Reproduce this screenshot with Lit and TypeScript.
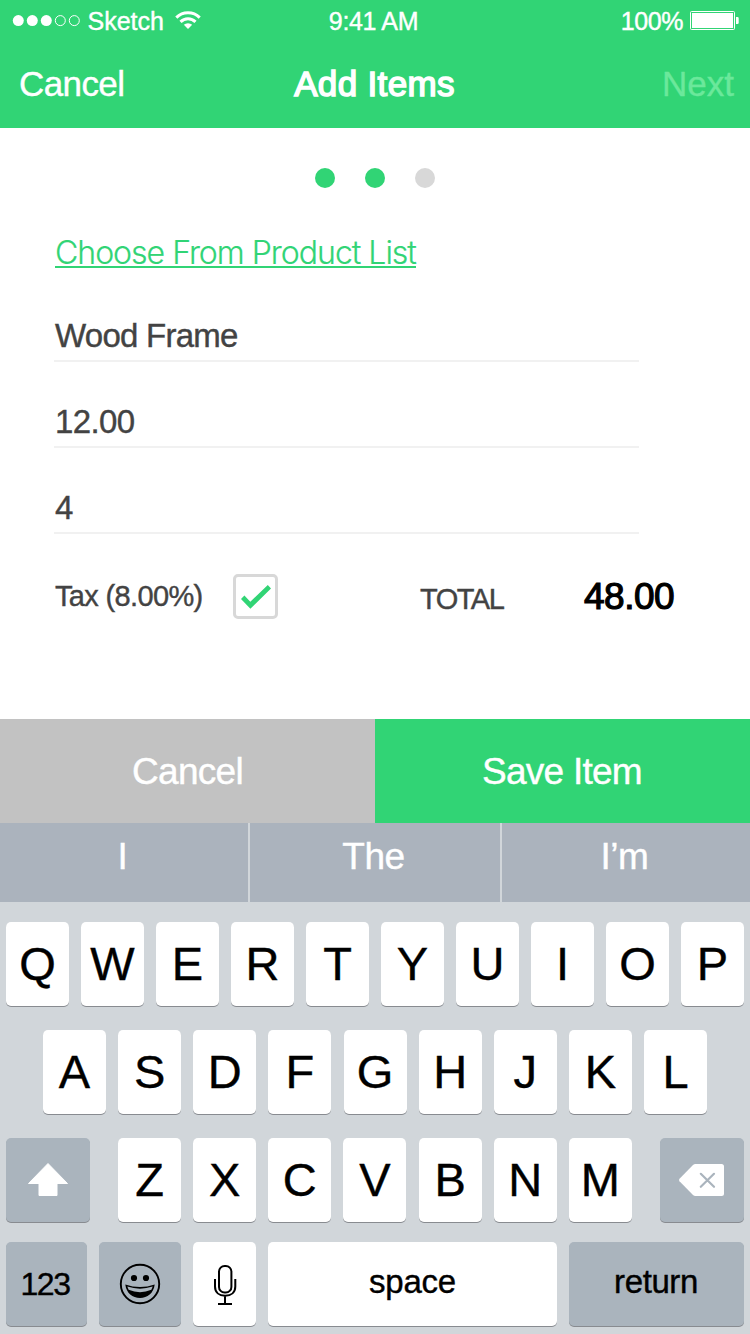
import { LitElement, html, css, svg } from "lit";
import { customElement, property } from "lit/decorators.js";

const ROWS = ["QWERTYUIOP", "ASDFGHJKL", "ZXCVBNM"];

@customElement("status-bar")
class StatusBar extends LitElement {
  static styles = css`
    :host { display: grid; grid-template-columns: 1fr auto 1fr; height: 42px; line-height: 43px; font-size: 25px; color: #fff; }
    .left { display: flex; padding-left: 12px; letter-spacing: 0; }
    .right { display: flex; justify-content: flex-end; padding-right: 11px; letter-spacing: -0.4px; }
    .time { letter-spacing: -0.35px; padding-right: 3px; }
    .signal { width: 69px; height: 42px; margin-right: 6.5px; }
    .wifi { width: 27px; height: 42px; margin-left: 11px; }
    .battery { width: 50px; height: 42px; margin-left: 6px; }
    svg { display: block; flex: none; }
  `;
  render() {
    return html`
      <div class="left">
        <svg class="signal" viewBox="0 0 69 42">
          ${[0, 1, 2, 3, 4].map((i) =>
            i < 3
              ? svg`<circle cx=${6.3 + i * 14} cy="20.6" r="5.5" fill="#fff"></circle>`
              : svg`<circle cx=${6.3 + i * 14} cy="20.6" r="5" fill="none" stroke="#fff"></circle>`
          )}
        </svg>
        <span>Sketch</span>
        <svg class="wifi" viewBox="0 0 27 42">
          <g fill="none" stroke="#fff" stroke-width="3">
            <path d="M1.300 17.600a16.600 16.600 0 0 1 23.400 0"></path>
            <path d="M5.500 21.900a10.600 10.600 0 0 1 15 0"></path>
          </g>
          <path d="M13 29l-4.200-4.200a6.300 6.300 0 0 1 8.400 0z" fill="#fff"></path>
        </svg>
      </div>
      <span class="time">9:41 AM</span>
      <div class="right">
        <span>100%</span>
        <svg class="battery" viewBox="0 0 50 42">
          <rect x="1.5" y="11.5" width="44" height="18" rx="1" fill="none" stroke="#fff"></rect>
          <rect x="3" y="13" width="41" height="15" fill="#fff"></rect>
          <path d="M47 17h1.500a1.200 1.200 0 0 1 1.200 1.200v4.600a1.200 1.200 0 0 1-1.200 1.200H47z" fill="#fff"></path>
        </svg>
      </div>
    `;
  }
}

@customElement("key-cap")
class KeyCap extends LitElement {
  @property({ type: Boolean, reflect: true }) dark = false;
  static styles = css`
    :host { display: flex; justify-content: center; width: 63px; height: 84px; flex: none; border-radius: 5px;
      background: #fff; box-shadow: 0 1px 0 #888b90; color: #000; font-size: 47px; line-height: 84px; }
    :host([dark]) { background: #aab4bd; }
  `;
  render() {
    return html`<slot></slot>`;
  }
}

@customElement("soft-keyboard")
class SoftKeyboard extends LitElement {
  static styles = css`
    :host { display: block; background: #d1d6da; }
    .hints { display: grid; grid-template-columns: 248px 250px 248px; gap: 2px; height: 79px; }
    .hints span { background: #abb3bd; color: #fff; font-size: 37px; line-height: 67px; text-align: center; padding-right: 3px; letter-spacing: -0.5px; }
    .keys { display: flex; flex-direction: column; padding: 20px 6px 8px; }
    .row { display: flex; justify-content: space-between; height: 84px; margin-bottom: 24px; }
    .second { padding: 0 37px; }
    .third { margin-bottom: 20px; }
    .last { margin-bottom: 0; }
    .letters { display: flex; justify-content: space-between; width: 514px; }
    .wide { width: 84px; }
    .num { width: 81px; font-size: 32px; letter-spacing: -1.4px; text-indent: -3px; }
    .emoji { width: 82px; }
    .space { width: 289px; font-size: 33px; line-height: 79px; letter-spacing: -0.2px; }
    .return { width: 175px; font-size: 33px; line-height: 79px; letter-spacing: -0.4px; text-indent: -1px; }
    svg { display: block; flex: none; height: 84px; }
  `;
  private letters(row: string) {
    return [...row].map((c) => html`<key-cap>${c}</key-cap>`);
  }
  render() {
    return html`
      <div class="hints"><span>I</span><span>The</span><span>I’m</span></div>
      <div class="keys">
        <div class="row">${this.letters(ROWS[0])}</div>
        <div class="row second">${this.letters(ROWS[1])}</div>
        <div class="row third">
          <key-cap dark class="wide">
            <svg width="84" viewBox="0 0 84 84">
              <path d="M42 25.500L61.500 45.500H51V57.500H33V45.500H22.500Z" fill="#fff" stroke="#fff" stroke-linejoin="round"></path>
            </svg>
          </key-cap>
          <div class="letters">${this.letters(ROWS[2])}</div>
          <key-cap dark class="wide">
            <svg width="84" viewBox="0 0 84 84">
              <path d="M35.500 26H61.500a2.500 2.500 0 0 1 2.500 2.500V55.500a2.500 2.500 0 0 1-2.500 2.500H35.500q-1.500 0-2.500-1L19.500 43.200q-1-1.200 0-2.400L33 27q1-1 2.500-1z" fill="#fff"></path>
              <path d="M40.800 35.800L54 48.800M54 35.800L40.800 48.800" stroke="#aab4bd" stroke-width="2.200" stroke-linecap="round"></path>
            </svg>
          </key-cap>
        </div>
        <div class="row last">
          <key-cap dark class="num">123</key-cap>
          <key-cap dark class="emoji">
            <svg width="82" viewBox="0 0 82 84">
              <circle cx="41" cy="42" r="19.200" fill="none" stroke="#000" stroke-width="1.900"></circle>
              <circle cx="35" cy="36" r="3.100"></circle>
              <circle cx="47" cy="36" r="3.100"></circle>
              <path d="M26.300 42.600Q41 47.600 55.700 42.600C54.500 51.500 48.500 56 41 56S27.500 51.500 26.300 42.600Z"></path>
              <path d="M28.300 44.600Q41 48.800 53.700 44.600L52.400 47.800Q41 52.600 29.600 47.800Z" fill="#aab4bd"></path>
            </svg>
          </key-cap>
          <key-cap>
            <svg width="63" viewBox="0 0 63 84" fill="none" stroke="#000" stroke-width="2">
              <rect x="26" y="24" width="12.400" height="26.500" rx="5.600"></rect>
              <path d="M22 37v7.500c0 6 4 9.200 10.100 9.200s10.200-3.200 10.200-9.200V37M32 54v8M25 62h14"></path>
            </svg>
          </key-cap>
          <key-cap class="space">space</key-cap>
          <key-cap dark class="return">return</key-cap>
        </div>
      </div>
    `;
  }
}

@customElement("app-root")
class AppRoot extends LitElement {
  static styles = css`
    :host { display: flex; flex-direction: column; width: 750px; height: 1334px; overflow: hidden; background: #fff;
      font-family: "Liberation Sans", Arial, sans-serif; color: #434343; white-space: nowrap; -webkit-text-stroke: 0.4px currentColor; }
    header { background: #31d475; color: #fff; height: 128px; flex: none; }
    nav { display: grid; grid-template-columns: 1fr auto 1fr; height: 86px; line-height: 84px; font-size: 35px; padding: 0 16px 0 19px; }
    .cancel { letter-spacing: -0.6px; }
    .title { letter-spacing: 0.35px; padding-right: 4px; -webkit-text-stroke: 1.5px currentColor; }
    .next { text-align: right; color: #6be89b; letter-spacing: 0; }
    main { flex: 1; padding: 40px 54px 0; }
    .steps { display: flex; justify-content: center; gap: 30px; }
    .step { width: 20px; height: 20px; border-radius: 50%; background: #d8d8d8; }
    .done { background: #31d475; }
    .link { display: block; width: 361px; margin: 43px 0 0 1px; height: 35px; line-height: 44px; border-bottom: 2px solid #31d475;
      color: #31d475; font-family: Inter, sans-serif; font-weight: 300; font-size: 32px; letter-spacing: -1px; -webkit-text-stroke: 0.2px currentColor; }
    .fields { width: 585px; padding-top: 8px; }
    .field { margin-top: 39px; line-height: 42px; padding: 0 0 3px 1px; border-bottom: 2px solid #f1f1f1; font-size: 33px; letter-spacing: -0.6px; }
    .name { letter-spacing: -0.75px; }
    .summary { display: flex; height: 45px; margin-top: 40px; padding-left: 1px; }
    .tax { width: 178px; font-size: 29px; line-height: 44px; letter-spacing: -0.65px; }
    .box { box-sizing: border-box; width: 45px; height: 45px; border: 3px solid #d8d8d8; border-radius: 5px; }
    .box svg { display: block; margin: -3px; }
    .total { width: 164px; padding-left: 142px; font-size: 29px; line-height: 50px; letter-spacing: -1.5px; }
    .amount { font-size: 37px; line-height: 45px; color: #000; letter-spacing: -0.5px; -webkit-text-stroke: 1.2px #000; }
    .actions { display: grid; grid-template-columns: 1fr 1fr; height: 104px; flex: none; color: #fff; font-size: 37px; line-height: 105px; text-align: center; }
    .dismiss { background: #c2c2c2; letter-spacing: -0.7px; }
    .save { background: #31d475; letter-spacing: -0.75px; padding-right: 1px; }
    soft-keyboard { height: 511px; flex: none; }
  `;
  render() {
    return html`
      <header>
        <status-bar></status-bar>
        <nav><span class="cancel">Cancel</span><span class="title">Add Items</span><span class="next">Next</span></nav>
      </header>
      <main>
        <div class="steps"><i class="step done"></i><i class="step done"></i><i class="step"></i></div>
        <a class="link">Choose From Product List</a>
        <div class="fields">
          <div class="field name">Wood Frame</div>
          <div class="field">12.00</div>
          <div class="field">4</div>
        </div>
        <div class="summary">
          <span class="tax">Tax (8.00%)</span>
          <span class="box">
            <svg width="45" height="45"><path d="M8 25L11.400 21.600L17.300 27.800L34.800 11L38 14.500L17.400 34.700Z" fill="#31d475"></path></svg>
          </span>
          <span class="total">TOTAL</span>
          <span class="amount">48.00</span>
        </div>
      </main>
      <div class="actions"><span class="dismiss">Cancel</span><span class="save">Save Item</span></div>
      <soft-keyboard></soft-keyboard>
    `;
  }
}
